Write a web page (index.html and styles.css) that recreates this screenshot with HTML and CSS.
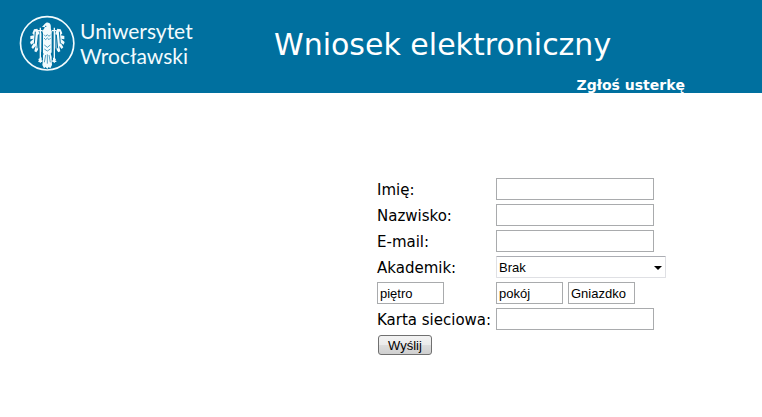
FILE: index.html
```html
<!DOCTYPE html>
<html lang="pl">
<head>
<meta charset="utf-8">
<title>Wniosek elektroniczny</title>
<link rel="stylesheet" href="styles.css">
</head>
<body>
<header class="header">
  <div class="brand">
    <svg class="crest" viewBox="27 30 168 168" aria-hidden="true">
      <circle cx="111.500" cy="115" r="80" fill="none" stroke="#f2fbfd" stroke-width="5"/>
      <g fill="#f2fbfd">
        <path d="M96 66l8-9c4-7 14-6 17 1 3 6 0 12 3 18l4 10-1 54-5 6 4 10 12 6-3 8-10-4 1 14-5 10-5-4-4 6-5-6-5 4-5-10 2-14-11 4-3-8 12-6 4-10-6-6-1-54 5-10c4-6 5-8 5-10z"/>
        <path d="M88 84l-6-13-10 2-5 12 5 6-11 2 0 10 10-2-11 10 3 8 9-6-8 14 5 5 8-10-4 17 6 3 9-13z"/>
        <path d="M136 84l6-13 10 2 5 12-5 6 11 2 0 10-10-2 11 10-3 8-9-6 8 14-5 5-8-10 4 17-6 3-9-13z"/>
      </g>
      <g fill="none" stroke="#00709f">
        <path d="M85 90l-4 40M76 80l-3 36M139 90l4 40M148 80l3 36" stroke-width="3"/>
        <path d="M97 82v84M127 82v84" stroke-width="4"/>
        <path d="M86 88v48M138 88v48" stroke-width="3"/>
        <path d="M102 89l5 5 5-5 5 5 5-5M102 99l5 5 5-5 5 5 5-5M103 120l9 7 9-7M103 132l9 6 9-6M107 150l-4 22M112 148v28M117 150l4 22" stroke-width="2"/>
        <path d="M105 64h4" stroke-width="3"/>
      </g>
      <path d="M91 68v105M133 68v105M84 77h14M126 77h14M85 169h12M127 169h12" fill="none" stroke="#f2fbfd" stroke-width="4"/>
    </svg>
    <div class="brand-name">Uniwersytet<br>Wrocławski</div>
  </div>
  <h1 class="title">Wniosek elektroniczny</h1>
  <a class="report" href="#usterka">Zgłoś usterkę</a>
</header>
<main class="content">
  <form class="form">
    <label for="imie">Imię:</label>
    <input class="field" id="imie" type="text">
    <label for="nazwisko">Nazwisko:</label>
    <input class="field" id="nazwisko" type="text">
    <label for="email">E-mail:</label>
    <input class="field" id="email" type="text">
    <label for="akademik">Akademik:</label>
    <div class="select-box">
      <select class="select" id="akademik"><option>Brak</option></select>
      <svg class="arrow" viewBox="0 0 8 4" aria-hidden="true"><path d="M0 0h8L4 4z"/></svg>
    </div>
    <input class="field short" type="text" value="piętro" aria-label="piętro">
    <div class="pair">
      <input class="field short" type="text" value="pokój" aria-label="pokój">
      <input class="field short" type="text" value="Gniazdko" aria-label="Gniazdko">
    </div>
    <label for="karta">Karta sieciowa:</label>
    <input class="field" id="karta" type="text">
    <button class="submit" type="button">Wyślij</button>
  </form>
</main>
</body>
</html>
```
FILE: styles.css
```css
* {
  box-sizing: border-box;
}

body {
  margin: 0;
  background: #fff;
  color: #000;
  font-family: Verdana, "DejaVu Sans", sans-serif;
  font-size: 15px;
}

.header {
  display: grid;
  grid-template-columns: 255px 1fr;
  grid-template-rows: 76px 17px;
  padding-left: 19px;
  background: #00709f;
  color: #fff;
}

.brand {
  display: flex;
  gap: 5px;
  padding-top: 15px;
}

.crest {
  width: 56px;
  height: 56px;
}

.brand-name {
  color: #f2fbfd;
  font-family: Lato, sans-serif;
  font-size: 21px;
  font-weight: 400;
  line-height: 25px;
  padding-top: 3px;
}

.title {
  margin: 0;
  padding-top: 25px;
  font-size: 30px;
  font-weight: 400;
  line-height: 40px;
}

.report {
  grid-column: 2;
  justify-self: end;
  margin-right: 77px;
  color: #fff;
  font-size: 14px;
  font-weight: 700;
  line-height: 18px;
  text-decoration: none;
}

.content {
  padding: 85px 16px 40px 377px;
}

.form {
  display: grid;
  grid-template-columns: 115px 170px;
  grid-auto-rows: 22px;
  gap: 4px;
  align-items: center;
}

.form label {
  line-height: 24px;
  white-space: nowrap;
  align-self: start;
}

.field,
.select,
.submit {
  font-family: "Liberation Sans", sans-serif;
  font-size: 13px;
  color: #000;
}

.field {
  width: 158px;
  height: 22px;
  margin: 0;
  padding: 1px 2px;
  border: 1px solid #a9abad;
  background: #fff;
}

.short {
  width: 67px;
}

.pair {
  display: flex;
  gap: 5px;
}

.select-box {
  position: relative;
}

.select {
  display: block;
  width: 100%;
  height: 22px;
  padding: 0 2px;
  appearance: none;
  border: 1px solid #dfe0e4;
  border-top-color: #abadb3;
  border-radius: 1px;
  background: #fff;
}

.arrow {
  position: absolute;
  top: 10px;
  right: 4px;
  width: 8px;
  height: 4px;
  pointer-events: none;
}

.submit {
  justify-self: start;
  height: 20px;
  margin-left: 1px;
  padding: 0 9px;
  border: 1px solid #707070;
  border-radius: 3px;
  background: linear-gradient(#f2f2f2 0%, #ebebeb 50%, #dddddd 50%, #cfcfcf 100%);
}
```
